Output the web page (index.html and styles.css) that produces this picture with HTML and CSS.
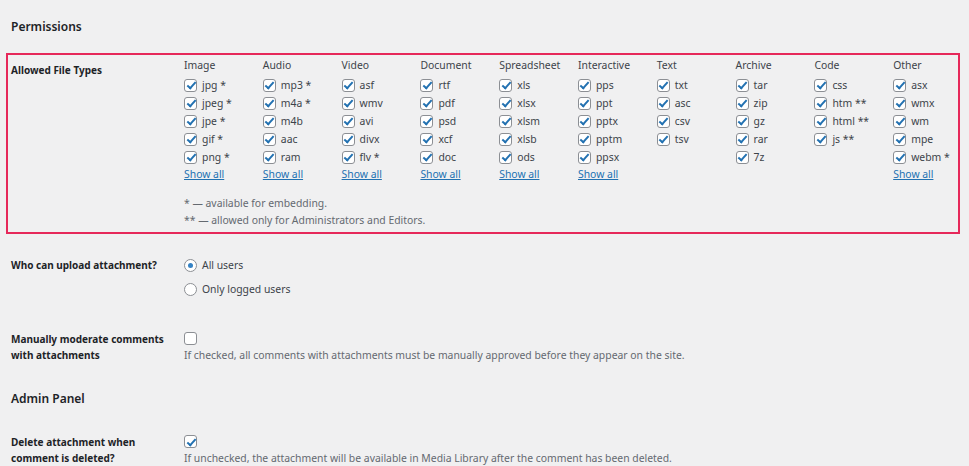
FILE: index.html
```html
<!DOCTYPE html>
<html lang="en">
<head>
    <meta charset="UTF-8">
    <title>Attachments Settings</title>
    <link rel="stylesheet" href="styles.css">
</head>
<body>
    <div class="wrap">
        <h2 class="section-title">Permissions</h2>

        <div class="row row-types">
            <div class="row-label types-label">Allowed File Types</div>
            <div class="row-field">
                <div class="types">
                    <div class="type-col">
                        <div class="type-head">Image</div>
                        <label class="opt"><span class="cb on"></span>jpg *</label>
                        <label class="opt"><span class="cb on"></span>jpeg *</label>
                        <label class="opt"><span class="cb on"></span>jpe *</label>
                        <label class="opt"><span class="cb on"></span>gif *</label>
                        <label class="opt"><span class="cb on"></span>png *</label>
                        <a href="#" class="show-all">Show all</a>
                    </div>
                    <div class="type-col">
                        <div class="type-head">Audio</div>
                        <label class="opt"><span class="cb on"></span>mp3 *</label>
                        <label class="opt"><span class="cb on"></span>m4a *</label>
                        <label class="opt"><span class="cb on"></span>m4b</label>
                        <label class="opt"><span class="cb on"></span>aac</label>
                        <label class="opt"><span class="cb on"></span>ram</label>
                        <a href="#" class="show-all">Show all</a>
                    </div>
                    <div class="type-col">
                        <div class="type-head">Video</div>
                        <label class="opt"><span class="cb on"></span>asf</label>
                        <label class="opt"><span class="cb on"></span>wmv</label>
                        <label class="opt"><span class="cb on"></span>avi</label>
                        <label class="opt"><span class="cb on"></span>divx</label>
                        <label class="opt"><span class="cb on"></span>flv *</label>
                        <a href="#" class="show-all">Show all</a>
                    </div>
                    <div class="type-col">
                        <div class="type-head">Document</div>
                        <label class="opt"><span class="cb on"></span>rtf</label>
                        <label class="opt"><span class="cb on"></span>pdf</label>
                        <label class="opt"><span class="cb on"></span>psd</label>
                        <label class="opt"><span class="cb on"></span>xcf</label>
                        <label class="opt"><span class="cb on"></span>doc</label>
                        <a href="#" class="show-all">Show all</a>
                    </div>
                    <div class="type-col">
                        <div class="type-head">Spreadsheet</div>
                        <label class="opt"><span class="cb on"></span>xls</label>
                        <label class="opt"><span class="cb on"></span>xlsx</label>
                        <label class="opt"><span class="cb on"></span>xlsm</label>
                        <label class="opt"><span class="cb on"></span>xlsb</label>
                        <label class="opt"><span class="cb on"></span>ods</label>
                        <a href="#" class="show-all">Show all</a>
                    </div>
                    <div class="type-col">
                        <div class="type-head">Interactive</div>
                        <label class="opt"><span class="cb on"></span>pps</label>
                        <label class="opt"><span class="cb on"></span>ppt</label>
                        <label class="opt"><span class="cb on"></span>pptx</label>
                        <label class="opt"><span class="cb on"></span>pptm</label>
                        <label class="opt"><span class="cb on"></span>ppsx</label>
                        <a href="#" class="show-all">Show all</a>
                    </div>
                    <div class="type-col">
                        <div class="type-head">Text</div>
                        <label class="opt"><span class="cb on"></span>txt</label>
                        <label class="opt"><span class="cb on"></span>asc</label>
                        <label class="opt"><span class="cb on"></span>csv</label>
                        <label class="opt"><span class="cb on"></span>tsv</label>
                    </div>
                    <div class="type-col">
                        <div class="type-head">Archive</div>
                        <label class="opt"><span class="cb on"></span>tar</label>
                        <label class="opt"><span class="cb on"></span>zip</label>
                        <label class="opt"><span class="cb on"></span>gz</label>
                        <label class="opt"><span class="cb on"></span>rar</label>
                        <label class="opt"><span class="cb on"></span>7z</label>
                    </div>
                    <div class="type-col">
                        <div class="type-head">Code</div>
                        <label class="opt"><span class="cb on"></span>css</label>
                        <label class="opt"><span class="cb on"></span>htm **</label>
                        <label class="opt"><span class="cb on"></span>html **</label>
                        <label class="opt"><span class="cb on"></span>js **</label>
                    </div>
                    <div class="type-col">
                        <div class="type-head">Other</div>
                        <label class="opt"><span class="cb on"></span>asx</label>
                        <label class="opt"><span class="cb on"></span>wmx</label>
                        <label class="opt"><span class="cb on"></span>wm</label>
                        <label class="opt"><span class="cb on"></span>mpe</label>
                        <label class="opt"><span class="cb on"></span>webm *</label>
                        <a href="#" class="show-all">Show all</a>
                    </div>
                </div>
                <p class="note note-first">* — available for embedding.</p>
                <p class="note">** — allowed only for Administrators and Editors.</p>
            </div>
        </div>

        <div class="row row-upload">
            <div class="row-label">Who can upload attachment?</div>
            <div class="row-field">
                <label class="radio-opt"><span class="radio on"></span>All users</label>
                <label class="radio-opt"><span class="radio"></span>Only logged users</label>
            </div>
        </div>

        <div class="row row-moderate">
            <div class="row-label">Manually moderate comments with attachments</div>
            <div class="row-field">
                <span class="cb single"></span>
                <p class="desc">If checked, all comments with attachments must be manually approved before they appear on the site.</p>
            </div>
        </div>

        <h2 class="section-title admin-title">Admin Panel</h2>

        <div class="row row-delete">
            <div class="row-label">Delete attachment when comment is deleted?</div>
            <div class="row-field">
                <span class="cb on single"></span>
                <p class="desc">If unchecked, the attachment will be available in Media Library after the comment has been deleted.</p>
            </div>
        </div>
    </div>
</body>
</html>
```

FILE: styles.css
```css
body {
    margin: 0;
    background: #f0f0f1;
    font-family: "Noto Sans", "Open Sans", sans-serif;
    font-size: 10.4px;
    color: #3c434a;
    overflow: hidden;
}
.wrap {
    padding: 0 9px 0 6px;
}
.section-title {
    margin: 17px 0 16px 5px;
    font-size: 12px;
    line-height: 20px;
    font-weight: 600;
    color: #1d2327;
}
.row {
    display: grid;
    grid-template-columns: 173px 1fr;
    padding-left: 5px;
}
.row-label {
    font-size: 10px;
    font-weight: 700;
    color: #1d2327;
    line-height: 16px;
    padding-right: 10px;
}
.row-types {
    border: 2px solid #e6285a;
    padding-left: 3px;
    padding-bottom: 3px;
}
.types-label {
    padding-top: 7px;
}
.types {
    display: grid;
    grid-template-columns: repeat(10, 78.8px);
}
.type-head {
    line-height: 20px;
    margin-bottom: 1px;
}
.opt {
    display: flex;
    align-items: center;
    gap: 5px;
    height: 18px;
}
.show-all {
    display: block;
    line-height: 16px;
    color: #2271b1;
    text-decoration: underline;
}
.note {
    margin: 0;
    line-height: 17px;
    color: #646970;
}
.note-first {
    margin-top: 13px;
}

/* checkbox + radio */
.cb {
    position: relative;
    display: inline-block;
    width: 13px;
    height: 13px;
    box-sizing: border-box;
    border: 1px solid #8c8f94;
    border-radius: 3px;
    background: #fff;
    flex: none;
}
.cb.on::after {
    content: "";
    position: absolute;
    left: 3.5px;
    top: 0.5px;
    width: 3px;
    height: 7px;
    border: solid #2271b1;
    border-width: 0 2px 2px 0;
    transform: rotate(42deg);
}
.cb.single {
    display: block;
}
.radio {
    position: relative;
    display: inline-block;
    width: 13px;
    height: 13px;
    box-sizing: border-box;
    border: 1px solid #8c8f94;
    border-radius: 50%;
    background: #fff;
    flex: none;
}
.radio.on::after {
    content: "";
    position: absolute;
    left: 3px;
    top: 3px;
    width: 5px;
    height: 5px;
    border-radius: 50%;
    background: #3582c4;
}
.radio-opt {
    display: flex;
    align-items: center;
    gap: 5px;
    height: 24px;
}

.row-upload {
    margin-top: 19px;
}
.row-upload .row-label {
    padding-top: 4px;
}
.row-moderate {
    margin-top: 30px;
}
.row-moderate .cb,
.row-delete .cb {
    margin-top: 1px;
}
.desc {
    margin: 2px 0 0;
    line-height: 16px;
    color: #646970;
}
.admin-title {
    margin: 26px 0 25px 5px;
}
```
